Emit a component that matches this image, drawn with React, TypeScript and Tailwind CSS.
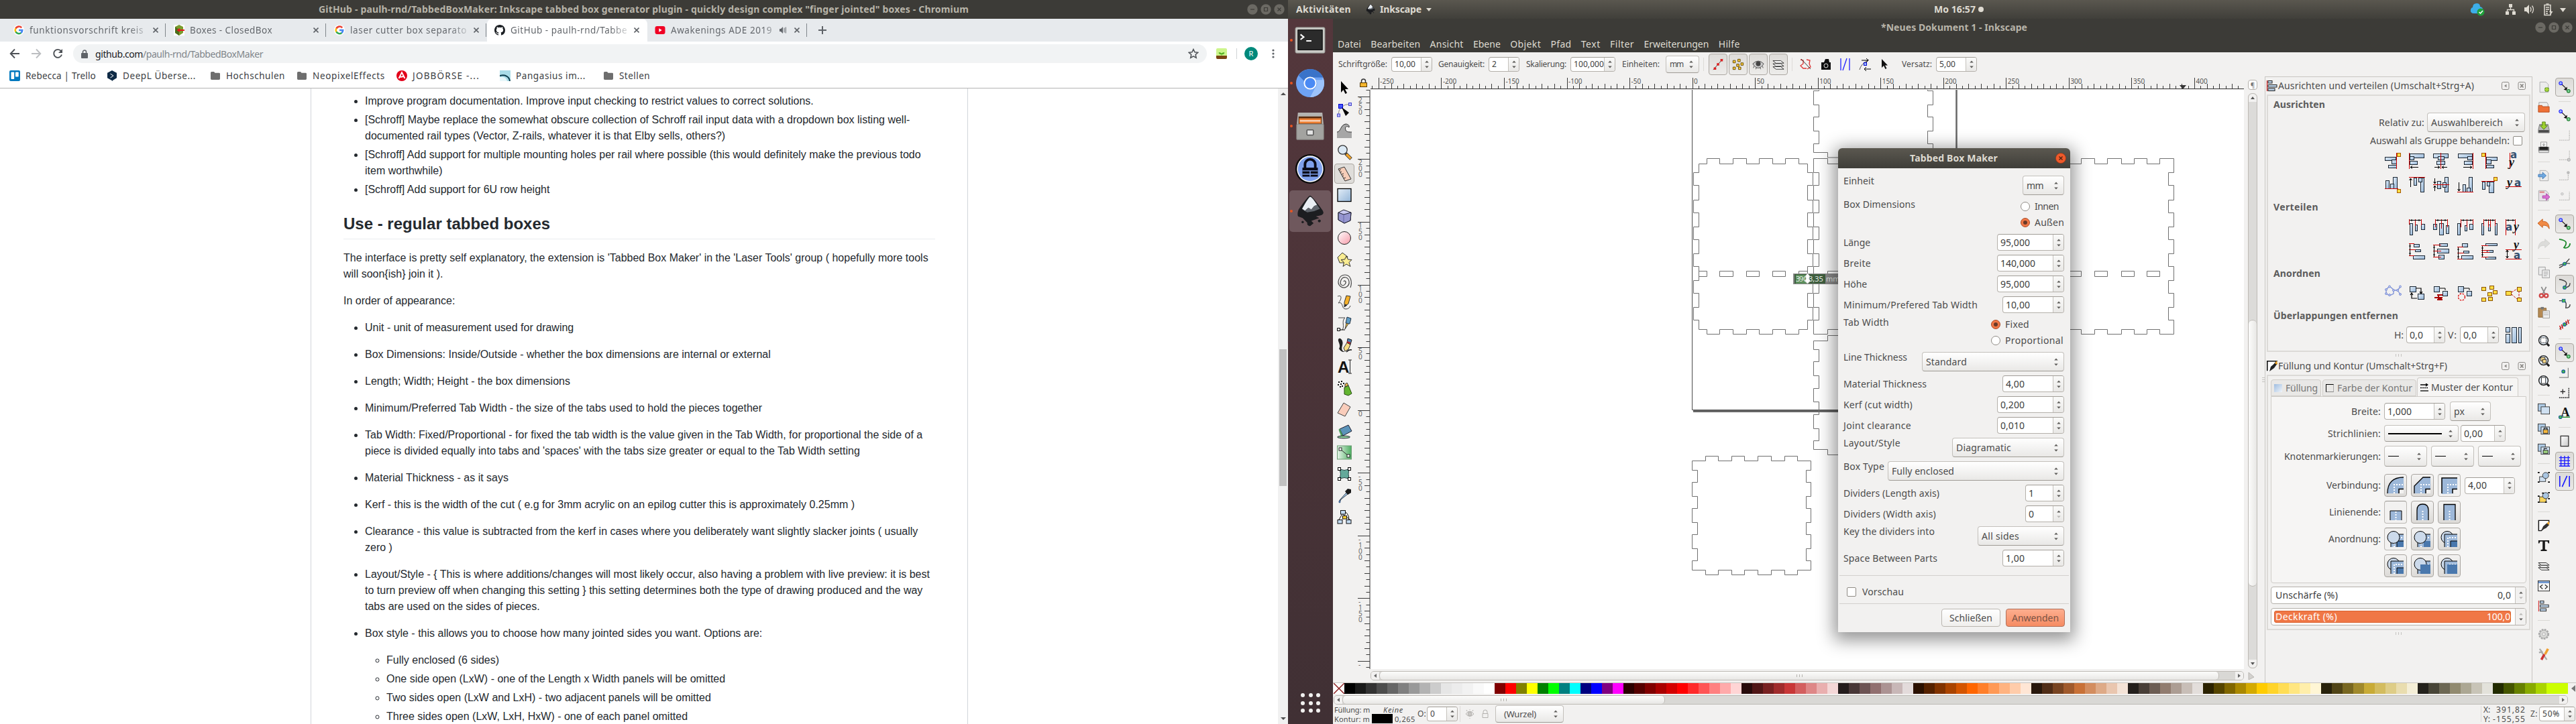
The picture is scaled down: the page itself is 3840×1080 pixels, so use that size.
import React, { useLayoutEffect, useRef } from "react";

type Kids = { children?: React.ReactNode };

/* Text set to a given measure by adjusting its tracking. */
function Fit({ w, c = "", children }: { w: number; c?: string; children: string }) {
  const ref = useRef<HTMLSpanElement>(null);
  useLayoutEffect(() => {
    const el = ref.current;
    if (!el) return;
    el.style.letterSpacing = "0px";
    el.style.width = "max-content";
    const natural = el.getBoundingClientRect().width;
    el.style.letterSpacing = (w - natural) / children.length + "px";
    el.style.width = w + "px";
  }, [w, children]);
  return (
    <span ref={ref} className={"inline-block whitespace-pre shrink-0 " + c}>
      {children}
    </span>
  );
}

/* ------------------------------------------------------------------ */
/* Chromium                                                            */
/* ------------------------------------------------------------------ */

function GoogleG() {
  return (
    <svg viewBox="0 0 16 16" className="size-4 shrink-0" fill="none" strokeWidth="2.6">
      <circle cx="8" cy="8" r="8" fill="#fff" />
      <path d="M12.2 4.4A5.3 5.3 0 0 0 3.4 5.6" stroke="#ea4335" />
      <path d="M3.4 5.4a5.3 5.3 0 0 0 0 5.2" stroke="#fbbc05" />
      <path d="M3.4 10.4a5.3 5.3 0 0 0 8 1.6" stroke="#34a853" />
      <path d="M8 8h5.2a5.3 5.3 0 0 1-1.9 4.1" stroke="#4285f4" />
    </svg>
  );
}

function GitHubMark() {
  return (
    <svg viewBox="0 0 16 16" className="size-4 shrink-0" fill="#1b1f23">
      <path d="M8 0C3.58 0 0 3.58 0 8c0 3.54 2.29 6.53 5.47 7.59.4.07.55-.17.55-.38v-1.49c-2.01.37-2.53-.49-2.69-.94-.09-.23-.48-.94-.82-1.13-.28-.15-.68-.52-.01-.53.63-.01 1.08.58 1.23.82.72 1.21 1.87.87 2.33.66.07-.52.28-.87.51-1.07-1.78-.2-3.64-.89-3.64-3.95 0-.87.31-1.59.82-2.15-.08-.2-.36-1.02.08-2.12 0 0 .67-.21 2.2.82a7.6 7.6 0 0 1 4 0c1.53-1.04 2.2-.82 2.2-.82.44 1.1.16 1.92.08 2.12.51.56.82 1.27.82 2.15 0 3.07-1.87 3.75-3.65 3.95.29.25.54.73.54 1.48v2.2c0 .21.15.46.55.38A8.01 8.01 0 0 0 16 8c0-4.42-3.58-8-8-8z" />
    </svg>
  );
}

function CloseX() {
  return (
    <svg viewBox="0 0 8 8" className="size-2 shrink-0" stroke="#5f6368" strokeWidth="1.6">
      <path d="M.5.5l7 7M7.5.5l-7 7" />
    </svg>
  );
}

function Tab({ icon, children, active, extra }: Kids & { icon: React.ReactNode; active?: boolean; extra?: React.ReactNode }) {
  return (
    <div
      className={
        active
          ? "flex h-[34px] w-[239px] shrink-0 items-center rounded-t-lg bg-white pl-[11px]"
          : "flex h-[34px] w-[239px] shrink-0 items-center pl-[11px]"
      }
    >
      {icon}
      <div className="ml-2 flex w-[176px] items-center overflow-hidden whitespace-nowrap text-[#5f6368]">
        <div className="flex-1 overflow-hidden bg-linear-to-r from-[#5f6368] from-85% to-[#5f636830] bg-clip-text text-transparent">{children}</div>
        {extra}
      </div>
      <div className="ml-[8px]">
        <CloseX />
      </div>
      {!active && <div className="ml-auto mr-px h-5 w-px bg-[#80868b]" />}
    </div>
  );
}

function Folder() {
  return (
    <svg viewBox="0 0 14 12" className="h-3 w-3.5 shrink-0" fill="#6e6e6e">
      <path d="M0 1.5Q0 0 1.5 0H5l1.5 1.7h6Q14 1.7 14 3v7.600Q14 12 12.500 12h-11Q0 12 0 10.600z" />
    </svg>
  );
}

function WinBtns() {
  return (
    <div className="flex gap-1">
      {["M5 8h6", "M5.500 5.500h5v5h-5z", "M5.500 5.500l5 5M10.500 5.500l-5 5"].map((d) => (
        <svg key={d} viewBox="0 0 16 16" className="size-4" fill="none">
          <circle cx="8" cy="8" r="7.700" fill="#6b6963" />
          <path d={d} stroke="#3c3b37" strokeWidth="1.200" />
        </svg>
      ))}
    </div>
  );
}

function Chromium() {
  return (
    <section className="flex h-[1080px] w-[1920px] shrink-0 flex-col bg-white font-['Noto_Sans',sans-serif]">
      <header className="flex h-7 shrink-0 items-center bg-[#3c3b37] pl-[475px] pr-[5px] text-[14px] font-bold leading-none text-[#b8b4a9]">
        <Fit w={969}>{'GitHub - paulh-rnd/TabbedBoxMaker: Inkscape tabbed box generator plugin - quickly design complex "finger jointed" boxes - Chromium'}</Fit>
        <div className="ml-auto">
          <WinBtns />
        </div>
      </header>

      <div className="flex h-[34px] shrink-0 bg-[#e7eaed] pl-[9px] text-[13.500px] leading-5">
        <Tab icon={<GoogleG />}>
          <Fit w={170}>funktionsvorschrift kreis</Fit>
        </Tab>
        <Tab
          icon={
            <svg viewBox="0 0 16 16" className="size-4 shrink-0">
              <path fill="#fff" d="M0 0h16v16H0z" />
              <path fill="#7a9c2e" d="M8 0l6 3v9l-6 4-6-4V3z" />
              <path fill="#4c6d1d" d="M8 7l-6-4v9l6 4z" />
              <path stroke="#e8141c" strokeWidth="2" d="M5 8h11M8 5.500v5" />
            </svg>
          }
        >
          <Fit w={123}>Boxes - ClosedBox</Fit>
        </Tab>
        <Tab icon={<GoogleG />}>
          <Fit w={174}>laser cutter box separato</Fit>
        </Tab>
        <Tab active icon={<GitHubMark />}>
          <Fit w={174}>GitHub - paulh-rnd/Tabbe</Fit>
        </Tab>
        <Tab
          icon={
            <svg viewBox="0 0 16 16" className="size-4 shrink-0">
              <rect y="2" x="0.500" width="15" height="12" rx="3" fill="#f00024" />
              <path fill="#fff" d="M6.300 5.300l4.400 2.700-4.400 2.700z" />
            </svg>
          }
          extra={
            <svg viewBox="0 0 12 12" className="mr-[3px] size-3 shrink-0" fill="#5f6368">
              <path d="M1 4h2l3-3v10L3 8H1z" />
              <path d="M8 2.500v7M10.300 1.500v9" stroke="#5f6368" />
            </svg>
          }
        >
          <Fit w={151}>Awakenings ADE 2019</Fit>
        </Tab>
        <svg viewBox="0 0 12 12" className="ml-[16px] mt-[11px] size-3" stroke="#5f6368" strokeWidth="2">
          <path d="M6 0v12M0 6h12" />
        </svg>
      </div>

      <div className="flex h-9 shrink-0 items-center">
        <svg viewBox="0 0 80 16" className="ml-[14px] h-4 w-20" fill="none" strokeWidth="1.900">
          <path stroke="#4d5156" d="M15 8H2M8 1.500L1.700 8 8 14.500" />
          <path stroke="#bcbec1" d="M33 8h13M40 1.500L46.300 8 40 14.500" />
          <path stroke="#4d5156" d="M77 4.200A6 6 0 1 0 78 9.500" />
          <path fill="#4d5156" d="M79 1v6h-6z" />
        </svg>
        <div className="ml-[15px] flex h-7 w-[1690px] items-center rounded-full bg-[#f1f3f4] pl-3 pr-3 text-[14px]">
          <svg viewBox="0 0 10 13" className="h-[13px] w-2.5" fill="#5f6368">
            <rect y="5" width="10" height="8" rx="1" />
            <path d="M2.500 5.500V3.500a2.500 2.500 0 0 1 5 0v2" fill="none" stroke="#5f6368" strokeWidth="1.500" />
          </svg>
          <Fit w={71} c="ml-[11px] text-[#202124]">github.com</Fit>
          <Fit w={179} c="text-[#80868b]">/paulh-rnd/TabbedBoxMaker</Fit>
          <svg viewBox="0 0 16 16" className="ml-auto size-4" fill="none" stroke="#4d5156" strokeWidth="1.500">
            <path d="M8 1.500l2 4.300 4.700.5-3.500 3.200 1 4.700L8 11.800l-4.200 2.400 1-4.700L1.300 6.300l4.700-.5z" />
          </svg>
        </div>
        <svg viewBox="0 0 16 16" className="ml-[14px] size-4">
          <rect width="16" height="16" rx="2" fill="#cdf58c" />
          <path d="M0 11h16v3a2 2 0 0 1-2 2H2a2 2 0 0 1-2-2z" fill="#7a4412" />
          <path d="M8 11V7M8 9C5 9 4 8 4 6.500 6 6.500 8 7 8 9zM8 9c3 0 4-1 4-2.500C10 6.500 8 7 8 9z" fill="#4fae1c" stroke="#4fae1c" strokeWidth=".6" />
        </svg>
        <div className="ml-[14px] h-4 w-px bg-[#d0d3d6]" />
        <div className="ml-[11px] flex size-5 items-center justify-center rounded-full bg-[#00897b] text-[11px] text-white">R</div>
        <svg viewBox="0 0 4 14" className="ml-[21px] h-3.5 w-1" fill="#5f6368">
          <circle cx="2" cy="2" r="1.600" />
          <circle cx="2" cy="7" r="1.600" />
          <circle cx="2" cy="12" r="1.600" />
        </svg>
      </div>

      <div className="flex h-[34px] shrink-0 items-center border-b border-[#b3b3b3] pb-[3px] pl-[14px] text-[13.500px] text-[#3c4043]">
        <svg viewBox="0 0 16 16" className="size-4">
          <rect width="16" height="16" rx="2" fill="#0079bf" />
          <rect x="2.500" y="2.500" width="4.700" height="10.500" rx=".7" fill="#fff" />
          <rect x="9" y="2.500" width="4.700" height="7" rx=".7" fill="#fff" />
        </svg>
        <Fit w={105} c="ml-2">Rebecca | Trello</Fit>
        <svg viewBox="0 0 16 16" className="ml-4 size-4">
          <path d="M8 0l7 3.800v7.500L9 15v1l-1-.7-7-4V3.800z" fill="#0f2b46" />
          <path d="M5.500 5l4.500 3-4.500 3" stroke="#fff" fill="none" />
        </svg>
        <Fit w={109} c="ml-2">DeepL Überse...</Fit>
        <div className="ml-[22px] flex"><Folder /></div>
        <Fit w={88} c="ml-[9px]">Hochschulen</Fit>
        <div className="ml-[18px] flex"><Folder /></div>
        <Fit w={108} c="ml-[9px]">NeopixelEffects</Fit>
        <svg viewBox="0 0 16 16" className="ml-[17px] size-4">
          <circle cx="8" cy="8" r="8" fill="#e2001a" />
          <path d="M3.500 12L8 3l4.500 9M5.500 10l5-1" stroke="#fff" strokeWidth="1.800" fill="none" />
        </svg>
        <Fit w={100} c="ml-2">JOBBÖRSE -...</Fit>
        <svg viewBox="0 0 16 16" className="ml-[30px] size-4">
          <rect width="16" height="16" fill="#a9dce8" />
          <path d="M0 10c7-1 10 2 11 6H0z" fill="#e8f7fa" />
          <path d="M0 8c8-2 14 1 15 8" stroke="#0b3b4c" strokeWidth="2" fill="none" />
        </svg>
        <Fit w={104} c="ml-2">Pangasius im...</Fit>
        <div className="ml-[27px] flex"><Folder /></div>
        <Fit w={46} c="ml-[9px]">Stellen</Fit>
      </div>

      <div className="flex min-h-0 flex-1 overflow-hidden">
        <div className="w-[464px] shrink-0 border-r border-[#d1d5da]" />
        <article className="w-[979px] shrink-0 border-r border-[#d1d5da] pl-[48px] pr-[48px] pt-[7px] font-['Liberation_Sans',sans-serif] text-[16px] leading-6 text-[#24292e]">
          <ul className="flex list-disc flex-col gap-1 pl-8">
            <li>Improve program documentation. Improve input checking to restrict values to correct solutions.</li>
            <li>[Schroff] Maybe replace the somewhat obscure collection of Schroff rail input data with a dropdown box listing well-documented rail types (Vector, Z-rails, whatever it is that Elby sells, others?)</li>
            <li>[Schroff] Add support for multiple mounting holes per rail where possible (this would definitely make the previous todo item worthwhile)</li>
            <li>[Schroff] Add support for 6U row height</li>
          </ul>
          <h2 className="mb-4 mt-6 border-b border-[#eaecef] pb-[7px] text-[24px] font-bold leading-[30px]">Use - regular tabbed boxes</h2>
          <p>The interface is pretty self explanatory, the extension is 'Tabbed Box Maker' in the 'Laser Tools' group ( hopefully more tools will soon&#123;ish&#125; join it ).</p>
          <p className="mt-4">In order of appearance:</p>
          <ul className="mt-4 flex list-disc flex-col gap-4 pl-8">
            <li>Unit - unit of measurement used for drawing</li>
            <li>Box Dimensions: Inside/Outside - whether the box dimensions are internal or external</li>
            <li>Length; Width; Height - the box dimensions</li>
            <li>Minimum/Preferred Tab Width - the size of the tabs used to hold the pieces together</li>
            <li>Tab Width: Fixed/Proportional - for fixed the tab width is the value given in the Tab Width, for proportional the side of a piece is divided equally into tabs and 'spaces' with the tabs size greater or equal to the Tab Width setting</li>
            <li>Material Thickness - as it says</li>
            <li>Kerf - this is the width of the cut ( e.g for 3mm acrylic on an epilog cutter this is approximately 0.25mm )</li>
            <li>Clearance - this value is subtracted from the kerf in cases where you deliberately want slightly slacker joints ( usually zero )</li>
            <li>Layout/Style - &#123; This is where additions/changes will most likely occur, also having a problem with live preview: it is best to turn preview off when changing this setting &#125; this setting determines both the type of drawing produced and the way tabs are used on the sides of pieces.</li>
            <li>
              Box style - this allows you to choose how many jointed sides you want. Options are:
              <ul className="mt-4 flex list-[circle] flex-col gap-1 pl-8">
                <li>Fully enclosed (6 sides)</li>
                <li>One side open (LxW) - one of the Length x Width panels will be omitted</li>
                <li>Two sides open (LxW and LxH) - two adjacent panels will be omitted</li>
                <li>Three sides open (LxW, LxH, HxW) - one of each panel omitted</li>
              </ul>
            </li>
          </ul>
        </article>
        <div className="ml-auto flex w-[15px] flex-col items-center bg-[#f1f1f1]">
          <svg viewBox="0 0 8 4" className="mt-[6px] h-1 w-2" fill="#505050"><path d="M4 0l4 4H0z" /></svg>
          <div className="mt-[379px] h-[204px] w-[11px] bg-[#c1c1c1]" />
          <svg viewBox="0 0 8 4" className="mb-[6px] mt-auto h-1 w-2" fill="#505050"><path d="M4 4l4-4H0z" /></svg>
        </div>
      </div>
    </section>
  );
}

/* ------------------------------------------------------------------ */
/* GTK widgets                                                         */
/* ------------------------------------------------------------------ */

function Arrows({ dim }: { dim?: "up" | "down" | "" }) {
  return (
    <svg viewBox="0 0 6 14" className="h-3.5 w-1.5 shrink-0">
      <path d="M3 1.500L5.800 4.500H.2z" fill={dim === "up" ? "#b9b8b6" : "#5c5b58"} />
      <path d="M3 12.500L5.800 9.500H.2z" fill={dim === "down" ? "#b9b8b6" : "#5c5b58"} />
    </svg>
  );
}

function Spin({ c, v, w, dim = "" }: { c: string; v: string; w: number; dim?: "up" | "down" | "" }) {
  return (
    <div className={"flex shrink-0 overflow-hidden rounded-[4px] border border-[#b4b0aa] border-t-[#a19d97] bg-white leading-none text-[#3c3c3c] " + c}>
      <div className="flex min-w-0 flex-1 items-center pl-1">
        <Fit w={w}>{v}</Fit>
      </div>
      <div className="flex w-4 items-center justify-center border-l border-[#c5c2bd] bg-linear-to-b from-[#fafaf9] to-[#e9e8e6]">
        <Arrows dim={dim} />
      </div>
    </div>
  );
}

function Combo({ c, children }: Kids & { c: string }) {
  return (
    <div className={"flex shrink-0 items-center justify-between rounded-[4px] border border-[#c3c0bb] border-b-[#9f9b95] bg-linear-to-b from-white to-[#e9e8e6] pl-[5px] pr-2 leading-none text-[#4c4c4c] " + c}>
      {children}
      <Arrows />
    </div>
  );
}

function Check() {
  return <span className="block size-3.5 shrink-0 rounded-[2px] border border-[#8f8b85] bg-white" />;
}

function Radio({ on, w, children }: { on?: boolean; w: number; children: string }) {
  return (
    <div className="flex h-6 items-center">
      <svg viewBox="0 0 14 14" className="mr-[7px] size-3.5">
        <circle cx="7" cy="7" r="6.500" fill={on ? "#f07746" : "#fff"} stroke={on ? "#a84e2b" : "#8f8b85"} />
        {on && <circle cx="7" cy="7" r="3" fill="#693a28" />}
      </svg>
      <Fit w={w}>{children}</Fit>
    </div>
  );
}

/* ------------------------------------------------------------------ */
/* Dialog                                                              */
/* ------------------------------------------------------------------ */

function Row({ label, lw, kind = "spin", children }: Kids & { label: string; lw: number; kind?: "spin" | "combo" | "radio" }) {
  const h = kind === "spin" ? "h-[25px] items-center" : kind === "combo" ? "h-[29px] items-start" : "h-[46px] items-start";
  return (
    <div className={"flex shrink-0 justify-between " + h}>
      <Fit w={lw} c="leading-4">{label}</Fit>
      {children}
    </div>
  );
}

function Dialog() {
  return (
    <div className="absolute left-[753px] top-[193px] flex h-[722px] w-[346px] flex-col rounded-t-[6px] bg-[#f2f1f0] text-[14px] leading-none text-[#4c4c4c] shadow-[0_6px_26px_6px_rgba(0,0,0,0.42)]">
      <div className="flex h-[30px] shrink-0 items-center rounded-t-[6px] bg-linear-to-b from-[#5b5850] to-[#3f3e39] pl-[107px] pr-1.5 font-bold text-[#dfdbd2]">
        <Fit w={131}>Tabbed Box Maker</Fit>
        <svg viewBox="0 0 16 16" className="ml-auto size-4">
          <circle cx="8" cy="8" r="7.600" fill="#ee5a2b" stroke="#9b3414" strokeWidth=".7" />
          <path d="M5.500 5.500l5 5M10.500 5.500l-5 5" stroke="#4b2012" strokeWidth="1.300" />
        </svg>
      </div>
      <div className="flex flex-col gap-1.5 pl-[8px] pr-[9px] pt-[11px]">
        <Row kind="combo" label="Einheit" lw={46}>
          <Combo c="h-[29px] w-[62px]"><Fit w={25}>mm</Fit></Combo>
        </Row>
        <Row kind="radio" label="Box Dimensions" lw={107}>
          <div className="-mt-px flex w-[65px] flex-col"><Radio w={36}>Innen</Radio><Radio on w={44}>Außen</Radio></div>
        </Row>
        <Row label="Länge" lw={40}><Spin c="h-[25px] w-[100px]" v="95,000" w={44} /></Row>
        <Row label="Breite" lw={41}><Spin c="h-[25px] w-[100px]" v="140,000" w={52} /></Row>
        <Row label="Höhe" lw={35}><Spin c="h-[25px] w-[100px]" v="95,000" w={44} /></Row>
        <Row label="Minimum/Prefered Tab Width" lw={200}><Spin c="h-[25px] w-[92px]" v="10,00" w={36} /></Row>
        <Row kind="radio" label="Tab Width" lw={68}>
          <div className="-mt-px flex w-[109px] flex-col"><Radio on w={36}>Fixed</Radio><Radio w={87}>Proportional</Radio></div>
        </Row>
        <Row kind="combo" label="Line Thickness" lw={95}><Combo c="h-[29px] w-[212px]"><Fit w={61}>Standard</Fit></Combo></Row>
        <Row label="Material Thickness" lw={124}><Spin c="h-[25px] w-[92px]" v="4,00" w={28} /></Row>
        <Row label="Kerf (cut width)" lw={103}><Spin c="h-[25px] w-[100px]" v="0,200" w={36} /></Row>
        <Row label="Joint clearance" lw={101}><Spin c="h-[25px] w-[100px]" v="0,010" w={36} /></Row>
        <Row kind="combo" label="Layout/Style" lw={85}><Combo c="h-[29px] w-[167px]"><Fit w={82}>Diagramatic</Fit></Combo></Row>
        <Row kind="combo" label="Box Type" lw={61}><Combo c="h-[29px] w-[263px]"><Fit w={93}>Fully enclosed</Fit></Combo></Row>
        <Row label="Dividers (Length axis)" lw={143}><Spin c="h-[25px] w-[58px]" v="1" w={8} /></Row>
        <Row label="Dividers (Width axis)" lw={138}><Spin c="h-[25px] w-[58px]" v="0" w={8} dim="down" /></Row>
        <Row kind="combo" label="Key the dividers into" lw={136}><Combo c="h-[29px] w-[129px]"><Fit w={56}>All sides</Fit></Combo></Row>
        <Row label="Space Between Parts" lw={140}><Spin c="h-[25px] w-[92px]" v="1,00" w={28} /></Row>
      </div>
      <div className="mx-0.5 mt-[13px] h-px bg-[#d2d0cd]" />
      <div className="flex h-[41px] items-center gap-[9px] pl-[13px] pt-1.5">
        <Check />
        <Fit w={62}>Vorschau</Fit>
      </div>
      <div className="mx-0.5 h-px bg-[#d2d0cd]" />
      <div className="flex justify-end gap-2 pr-2 pt-[7px]">
        <div className="flex h-[27px] w-[88px] items-center justify-center rounded-[4px] border border-[#bab6b0] bg-linear-to-b from-white to-[#f0efed]"><Fit w={64}>Schließen</Fit></div>
        <div className="flex h-[27px] w-[88px] items-center justify-center rounded-[4px] border border-[#b0705a] bg-linear-to-b from-[#fdae8f] to-[#f58b62] text-[#7a5345]"><Fit w={70}>Anwenden</Fit></div>
      </div>
    </div>
  );
}

/* ------------------------------------------------------------------ */
/* Rulers and canvas                                                   */
/* ------------------------------------------------------------------ */

const STEP = 9.355;

function TopRuler() {
  const ticks: React.ReactNode[] = [];
  for (let i = -51; i <= 88; i++) {
    const x = 479.6 + i * STEP;
    if (x < 0 || x > 1302) continue;
    const major = i % 10 === 0;
    const y = major ? 2 : i % 2 === 0 ? 11 : 14;
    ticks.push(<path key={i} d={"M" + (Math.round(x) + 0.5) + " " + y + "V19"} stroke="#3a3a3a" />);
    if (major) ticks.push(<text key={"t" + i} x={x + 2.5} y="10.500" fontSize="10" fill="#555">{String(i * 5)}</text>);
  }
  return (
    <svg viewBox="0 0 1302 20" className="h-5 w-[1302px] shrink-0">
      {ticks}
      <path d="M0 18.500h1302" stroke="#3a3a3a" strokeWidth="1.200" />
      <path d="M1206 13h10l-5 6z" fill="#333" />
    </svg>
  );
}

function SideRuler() {
  const out: React.ReactNode[] = [];
  for (let i = -41; i <= 51; i++) {
    const y = 477.6 - i * STEP;
    if (y < 0 || y > 864) continue;
    const major = i % 10 === 0;
    out.push(<path key={i} d={"M" + (major ? 0 : i % 2 === 0 ? 10 : 12.5) + " " + (Math.round(y) + 0.5) + "H18"} stroke="#3a3a3a" />);
    if (major)
      String(i * 5)
        .split("")
        .forEach((ch, k) => {
          const ty = y + 9 + k * 9;
          if (ty < 864) out.push(<text key={i + "-" + k} x="1" y={ty} fontSize="10" fill="#666">{ch}</text>);
        });
  }
  return (
    <svg viewBox="0 0 19 864" className="h-[864px] w-[19px] shrink-0">
      {out}
      <path d="M18 0v864" stroke="#3a3a3a" />
    </svg>
  );
}

type Pair = [number, number];

/* Closed outline of a finger-jointed panel; each edge toggles between two offsets. */
function panel(xs: number[], ys: number[], l: Pair, r: Pair, t: Pair, b: Pair) {
  const ex = xs.length % 2;
  const ey = ys.length % 2;
  let d = "M" + l[0] + " " + t[0];
  xs.forEach((x, i) => (d += "H" + x + "V" + t[(i + 1) % 2]));
  d += "H" + r[0];
  ys.forEach((y, i) => (d += "V" + y + "H" + r[(i + 1) % 2]));
  d += "V" + b[ex];
  [...xs].reverse().forEach((x, i) => (d += "H" + x + "V" + b[(ex + i + 1) % 2]));
  d += "H" + l[ey];
  [...ys].reverse().forEach((y, i) => (d += "V" + y + "H" + l[(ey + i + 1) % 2]));
  return d + "Z";
}

const YS = [257.5, 276.5, 298.5, 317.5, 338.5, 357.5, 378.5, 397.5, 418.5, 437.5, 458.5, 477.5];

function Canvas() {
  const xsA = [2544.5, 2563.5, 2583.5, 2603.5, 2622.5, 2642.5, 2661.5, 2681.5];
  return (
    <svg viewBox="2043 134 1302 864" className="h-[864px] w-[1302px] shrink-0 bg-white" fill="none" stroke="#707070">
      <path d="M2522.500 134V611.500H2916" stroke="#4a4a4a" />
      <path d="M2916.500 134V615" stroke="#666" strokeWidth="2.500" />
      <path d="M2524 613.500H2917.500" stroke="#666" strokeWidth="3" />
      <path d={panel(xsA, YS, [2532.5, 2524.5], [2694.5, 2702.5], [244.5, 236.5], [491.5, 498.5])} />
      <path d={panel([2724.5], YS, [2703.5, 2711.5], [2800, 2792], [236.5, 244.5], [498.5, 491.5])} />
      <path d={panel([3102.5, 3122.5, 3141.5, 3162.5, 3181.5, 3200.5, 3219.5], YS, [3060, 3052], [3240.5, 3232.5], [244.5, 236.5], [491.5, 498.5])} />
      <path d={panel([2724.5], [521.5, 539.5, 560.5, 579.5, 599.5, 618.5, 639.5, 657.5], [2703.5, 2711.5], [2800, 2792], [508.5, 500.5], [670.5, 678.5])} />
      <path d={panel([2542.5, 2561.5, 2581.5, 2600.5, 2620.5, 2640.5, 2660.5, 2679.5], [701.5, 719.5, 740.5, 758.5, 779.5, 797.5, 818.5, 836.5], [2522.5, 2530.5], [2699.5, 2692.5], [687.5, 680.5], [850.5, 857.5])} />
      <path d="M2711.500 134v1.500h-8v21h8v18h-8v21h8v19h-8v13h21v7.500h80M2873.500 134v1.500h8v21h-8v18h8v21h-8v19h8v13" />
      <path d="M2532.500 404.500h12v8h-12M2563.500 404.500h20v8h-20zM2603.500 404.500h19v8h-19zM2642.500 404.500h19v8h-19zM2681.500 412.500v-8h13M2724.500 404.500h20v8h-20zM3080 404.500h22.500v8H3080M3122.500 404.500h19v8h-19zM3162.500 404.500h19v8h-19zM3200.500 404.500h19v8h-19z" />
      <rect x="2673" y="408" width="70" height="16" fill="#8a8a8a" stroke="none" />
      <rect x="2675" y="409" width="46" height="14" fill="#3f5f3f" stroke="none" />
      <rect x="2677" y="410" width="18" height="13" fill="#5c8f5c" stroke="none" />
      <g stroke="none" fill="#e8eee8" fontSize="11">
        <text x="2677" y="420">3</text>
        <text x="2682" y="420">90</text>
        <text x="2696" y="420">3,35</text>
        <text x="2722" y="420">mm</text>
      </g>
      <path d="M2694.500 408l3 4-1 4 2 3-4 4-4-4 2-3-1-4z" fill="#fff" stroke="#ddd" />
    </svg>
  );
}

/* ------------------------------------------------------------------ */
/* Icons                                                               */
/* ------------------------------------------------------------------ */

const TOOLS: React.ReactNode[] = [
  <path d="M6 1v17l3.500-4 3 6 2.500-1.300-3-5.700h5z" fill="#000" />,
  <g fill="none" stroke="#222"><path d="M2 20Q2 4 20 3" stroke="#888" /><rect x="2.500" y="3.500" width="6" height="6" fill="#45f" stroke="#00c" /><rect x="17.500" y="1.500" width="4" height="4" fill="#bbf" stroke="#44c" /><rect x=".5" y="18" width="4" height="4" fill="#bbf" stroke="#44c" /><path d="M7 8l11 8-5 5z" fill="#000" stroke="none" /></g>,
  <g><path d="M0 22v-9c6 0 5-11 13-12 4 0 6 3 5 5-3-3-7-1-5 4 1 3 5 3 9 3v9z" fill="#a6a6a6" /><path d="M0 13c6 0 5-11 13-12 4 0 6 3 5 5-3-3-7-1-5 4 1 3 5 3 9 3" fill="none" stroke="#333" /></g>,
  <g><circle cx="8.500" cy="7.500" r="6.700" fill="#dbe9f5" stroke="#333" strokeWidth="1.300" /><path d="M13 13l8 8" stroke="#333" strokeWidth="5" /><path d="M14 14l6.500 6.500" stroke="#f3a52a" strokeWidth="3.400" /></g>,
  <g><path d="M2 4l9-3 10 18-9 3z" fill="#f6cdb8" stroke="#333" /><path d="M3 6l3-1M5 9l2-1M7 12l3-1M8 15l2-1M10 18l3-1" stroke="#333" /></g>,
  <rect x="1" y="1.500" width="20" height="19" fill="url(#blue)" stroke="#000" strokeWidth="1.300" />,
  <g stroke="#223" strokeWidth="1"><path d="M2 5l8-4 11 4-1 12-9 4-9-5z" fill="#c9c9f0" /><path d="M2 5l8 3 11-3-1 12-9 4-9-5z" fill="#8080c0" fillOpacity=".7" /><path d="M10 8v12" stroke="#66a" /></g>,
  <ellipse cx="11" cy="11" rx="9.500" ry="9.500" fill="url(#pink)" stroke="#222" />,
  <g fill="#f9ec91" stroke="#333"><path d="M1 8l7-7 8 6-3 9H4z" /><path d="M14 6l2.500 5 5.500.5-4 4 2 6-6-3.500L9 21.500l1.500-6L6 11.500l5.500-.5z" /></g>,
  <path d="M20 21c3-8 1-19-8-19S-1 14 5 19s14 0 13-7-9-9-12-2 3 10 6 6-1-7-2-4" fill="none" stroke="#444" strokeWidth="1.200" />,
  <g fill="none" stroke="#444"><path d="M1 2c8-3 5 6 1 10 8-3 4 9 11 9 4 0 6-2 7-5" /><path d="M14 1l6 1-3 11-6 5 0-7z" fill="#f5b02a" stroke="#333" /><path d="M11 18l1-4 3 1z" fill="#111" /></g>,
  <g fill="none" stroke="#444"><path d="M2 2h10C6 7 12 15 8 20" /><path d="M15 1l6 2-2 8-6-1z" fill="#5f9cc5" stroke="#234" /><path d="M14 10l3 1-5 8z" fill="#e9bd3c" /><path d="M.5 17.500h4v4h-4zM5 20h7" stroke="#000" /></g>,
  <g><path d="M3 1C-1 4 7 10 3 16c3 5 6 5 9 5-6-2-5-6-4-10C10 5 6 0 3 1z" fill="#222" /><path d="M12 20l-2-5 5-8 5 3-3 7z" fill="#f6dd83" stroke="#333" /><path d="M15 7l1-6 6 2-2 7z" fill="#4d7fae" stroke="#222" /><path d="M15 6l5 2" stroke="#b22" strokeWidth="2" /><path d="M14 21q4-4 8-3" fill="none" stroke="#111" strokeWidth="1.500" /></g>,
  <g><text x="1" y="20" fontSize="24" fontWeight="bold" fill="#111" fontFamily="Liberation Sans">A</text><path d="M19.500 1v20M17 1h5M17 21h5" stroke="#222" /></g>,
  <g><path d="M11 10l6-3 5 12-5 3-6-2z" fill="#63b530" stroke="#274d10" /><path d="M12 9V5l3-2 2 4z" fill="#e6b84c" stroke="#333" /><path d="M2 2h2M6 1h2M1 6h2M5 5h2M9 4h2M4 9h2M7 8h2" stroke="#111" strokeWidth="2" /></g>,
  <path d="M10 1l10 6-8 14L1 16z" fill="#f9cdbb" stroke="#444" />,
  <g stroke="#223"><path d="M4 8l13-6 5 9-13 7z" fill="#5b93b9" /><path d="M4 8c-1 4 3 5 3 11" fill="none" stroke="#4a9c5c" strokeWidth="2.500" /><ellipse cx="10" cy="20" rx="9.500" ry="1.800" fill="#8fd39b" /></g>,
  <g><rect x=".5" y="1" width="21" height="20" fill="url(#green)" stroke="#6a9c72" /><path d="M5 6l12 10" stroke="#333" /><rect x="3" y="4" width="4" height="4" fill="#fff" stroke="#222" /><rect x="15" y="14" width="4" height="4" fill="#fff" stroke="#222" /></g>,
  <g><path d="M4 4q7 3 14 0-2 7 0 14-7-3-14 0 3-7 0-14z" fill="#63a99a" stroke="#244" /><g fill="#fff" stroke="#000"><rect x="1.500" y="1.500" width="4" height="4" /><rect x="16.500" y="1.500" width="4" height="4" /><rect x="1.500" y="16.500" width="4" height="4" /><rect x="16.500" y="16.500" width="4" height="4" /></g></g>,
  <g><path d="M14 7l2 2-10 8-1 2-1-1z" fill="#a9cbe8" stroke="#345" /><path d="M12 5l4-4 5 1 0 5-5 3z" fill="#1a1a1a" /><path d="M4 18c-2 3-1 4 0 4s2-2 0-4z" fill="#4d7fb8" stroke="#235" strokeWidth=".6" /></g>,
  <g stroke="#111"><path d="M9 5L3 15M9 7l10 8M5 2q13 0 13 14" fill="none" /><rect x="5.500" y="1.500" width="7" height="5.500" fill="#c3dbf1" /><rect x="8.500" y="9.500" width="6" height="4.500" fill="#fc3" /><rect x="1" y="15.500" width="7" height="5.500" fill="#c3dbf1" /><rect x="14" y="15.500" width="7" height="5.500" fill="#c3dbf1" /></g>,
];

const doc = <path d="M3.500 1.500h10l4 4v13h-14z" fill="#ececec" stroke="#a8a8a8" />;
const magn = (
  <g><circle cx="9.500" cy="9.500" r="7.700" fill="#e3edf6" stroke="#222" strokeWidth="1.600" /><path d="M15 15l4 4" stroke="#222" strokeWidth="3.500" /></g>
);
const twoSq = (
  <g fill="#aecbe6" stroke="#333"><rect x=".5" y="1.500" width="12" height="12" /><rect x="5.500" y="6.500" width="14" height="12" fill="#cfe0f1" /></g>
);

const COMMANDS: (React.ReactNode | null)[] = [
  <g>{doc}<path d="M11.500 14h7M15 10.500v7" stroke="#4d8a12" strokeWidth="5" /><path d="M12 14h6M15 11v6" stroke="#a9d53a" strokeWidth="3" /></g>,
  <g><path d="M2 2h13l2 3v9H2z" fill="#eee" stroke="#999" /><path d="M1 18V7h6l1 2h11v9z" fill="#ee7137" stroke="#b4481a" /></g>,
  <g><path d="M3 5h14l2 9v5H1v-5z" fill="#b9b9b9" stroke="#777" /><path d="M1.500 14.500h17v4h-17z" fill="#4a4a4a" /><path d="M7.500 1h5v6H16l-6 6.500L4 7h3.500z" fill="#9fd02f" stroke="#4f7f10" /></g>,
  <g><path d="M5 1h10v8H5z" fill="#f4f4f4" stroke="#999" /><path d="M10 3v4M8 5l2 2 2-2" stroke="#777" fill="none" /><path d="M1 9h18v7H1z" fill="#7b7b7b" /><path d="M3 9h14v5H3z" fill="#222" /><path d="M2 15h16v3.500H2z" fill="#ddd" stroke="#888" /></g>,
  null,
  <g>{doc}<path d="M1 8h7V4.500L14 10l-6 5.500V12H1z" fill="#6ea8e0" stroke="#3f78b4" /></g>,
  <g><path d="M1.500 1.500h12l4 4v13h-16z" fill="#e7e0e7" stroke="#aaa" /><path d="M3 4h8" stroke="#d77" strokeWidth="2" /><path d="M8 10h6V6.500l6 5.500-6 5.500V14H8z" fill="#dd6fd6" stroke="#a444a0" /></g>,
  null,
  <path d="M0 9l8-7v4c7-1 11 4 11 12-2-4-5-6-11-5.500V16z" fill="#f08a45" stroke="#c15a1c" />,
  <path d="M20 9l-8-7v4C5 5 1 10 1 18c2-4 5-6 11-5.500V16z" fill="#dcdcda" stroke="#cfcfcc" />,
  null,
  <g fill="#ececec" stroke="#999"><path d="M1.500 1.500h11v13h-11z" /><path d="M7.500 6.500h12v13h-12z" /><path d="M10 10h7M10 13h7M10 16h5" /></g>,
  <g fill="none"><path d="M6 1l6 12M14 1L8 13" stroke="#8c8c8c" strokeWidth="2" /><circle cx="6" cy="15.500" r="3" stroke="#cf4646" strokeWidth="2.500" /><circle cx="14" cy="15.500" r="3" stroke="#cf4646" strokeWidth="2.500" /></g>,
  <g><path d="M1 3h13v15H1z" fill="#b58a54" stroke="#8a6636" /><path d="M5 1h5v4H5z" fill="#777" /><path d="M8.500 7.500h11v12h-11z" fill="#eee" stroke="#999" /><path d="M10 11h8M10 14h8" stroke="#aaa" /></g>,
  null,
  <g>{magn}<rect x="5" y="5.500" width="9" height="8" fill="#fff" stroke="#111" strokeDasharray="2 1" /></g>,
  <g>{magn}<rect x="5" y="4.500" width="7" height="6" fill="#f8d98a" stroke="#222" /><rect x="8" y="8" width="6" height="6" fill="#f8d98a" stroke="#222" /></g>,
  <g>{magn}<rect x="6" y="4.500" width="7" height="10" fill="#fff" stroke="#222" /></g>,
  null,
  twoSq,
  <g>{twoSq}<rect x="9" y="11" width="8" height="6" fill="#f5b73c" stroke="#222" /><path d="M10.500 11V8.500h5V11" fill="none" stroke="#222" strokeWidth="1.300" /></g>,
  <g>{twoSq}<rect x="9" y="12" width="8" height="5" fill="#9ed37f" stroke="#222" /><path d="M10.500 12V9h4v1" fill="none" stroke="#222" strokeWidth="1.300" /></g>,
  null,
  <g><rect x="3" y="9" width="10" height="8" fill="#cfe0f1" stroke="#333" /><circle cx="13" cy="7" r="5" fill="#aac6e2" stroke="#333" /><path d="M0 1h3v2H0zM17 1h3v2h-3zM0 17h3v2H0zM17 17h3v2h-3z" fill="#000" /></g>,
  <g><rect x="3" y="9" width="11" height="9" fill="#f8d35a" stroke="#333" /><circle cx="13" cy="7" r="5" fill="#aac6e2" stroke="#333" /><path d="M0 7h3v2H0zM7 2h3v2H7zM17 1h3v2h-3zM0 17h3v2H0zM12 17h3v2h-3zM17 11h3v2h-3z" fill="#000" /></g>,
  null,
  <g><path d="M2 2h16L2 18z" fill="#fff" /><path d="M1.500 1.500h17v4L6 18.500H1.500z" fill="none" stroke="#111" strokeWidth="1.600" /><path d="M6 18l3-7 6-5 4 3-5 5z" fill="#333" /><path d="M15 6l4-3v6z" fill="#f5a623" /></g>,
  <path d="M1 1h18v5h-1.500L16 3h-4v13l3 1v2H5v-2l3-1V3H4L2.500 6H1z" fill="#1a1a1a" />,
  <g fill="#f0f0f0" stroke="#222"><path d="M1 13l5 4h13l-5-4z" /><path d="M1 9l5 4h13l-5-4z" /><path d="M1 5l5 4h13l-5-4z" /></g>,
  <g><rect x=".5" y="1.500" width="19" height="17" fill="#f4f4f4" stroke="#222" /><path d="M1 4h18" stroke="#6a94cf" strokeWidth="3" /><path d="M8 8l-4 3.500L8 15M12 8l4 3.500-4 3.500" stroke="#222" fill="none" strokeWidth="1.300" /></g>,
  <g fill="#bcd3ea" stroke="#222"><path d="M1.500 1v18" stroke="#c00" /><rect x="4" y="1.500" width="6" height="4" /><rect x="4" y="8" width="14" height="4" /><rect x="4" y="14.500" width="10" height="4" /></g>,
  null,
  <g fill="#d8d8d6" stroke="#aaa"><circle cx="10" cy="10" r="7.500" strokeDasharray="3 1.500" strokeWidth="3" /><circle cx="10" cy="10" r="6.500" /><circle cx="10" cy="10" r="2.500" fill="#f2f1f0" /></g>,
  <g fill="none"><path d="M3 1l4 5-5 1M6 6l9 13" stroke="#aaa" strokeWidth="2.500" /><path d="M17 1l-5 9" stroke="#f0a030" strokeWidth="4" /><path d="M11 10l-5 9" stroke="#c33" strokeWidth="4" /></g>,
];

const node = (x: number, y: number, c = "#4bbd4b") => <circle cx={x} cy={y} r="2.600" fill={c} stroke="#175a9a" strokeWidth="1.200" />;
const snapPair = (
  <g><path d="M4 4l10 9.500" stroke="#111" strokeWidth="1.300" /><path d="M13 15.500l1.500-6-6 4.500z" fill="#111" /><circle cx="3.500" cy="3.500" r="2.600" fill="#9ab8ff" stroke="#1a1aff" strokeWidth="1.200" /><circle cx="16.500" cy="16.500" r="2.600" fill="#7fd49a" stroke="#1a7a2a" strokeWidth="1.200" /></g>
);
const dots = (d: string) => <path d={d} stroke="#bdbcba" strokeWidth="1.400" strokeDasharray="2 1" fill="none" />;

const SNAPS: ([React.ReactNode, boolean] | null)[] = [
  [snapPair, true],
  null,
  [snapPair, false],
  [dots("M1 18h17V1"), false],
  [<g>{dots("M1 17h17V1")}<circle cx="17" cy="17" r="2.500" fill="#ccc" stroke="#aaa" /></g>, false],
  [<g>{dots("M1 17h15V5")}<circle cx="16" cy="5" r="2.500" fill="#bbb" /></g>, false],
  [<g>{dots("M1 17h17V3")}<circle cx="6" cy="7" r="2" fill="#ddd" stroke="#bbb" /></g>, false],
  null,
  [snapPair, true],
  [<path d="M1 2c13 2 14 6 8 14 5 2 10-2 10-7" stroke="#1f8a2d" strokeWidth="2" fill="none" />, false],
  [<g><path d="M1 16C8 14 12 8 18 1M1 12q9-4 18-3" stroke="#444" fill="none" strokeWidth="1.500" />{node(10, 9.5)}</g>, false],
  [<g><path d="M1 2c14 2 14 7 9 13 5 1 9-2 9-7" stroke="#444" strokeWidth="1.600" fill="none" />{node(10, 15.5)}</g>, true],
  [<g><path d="M1 4h8c4 2 4 5 3 12 5 0 7-2 7-6" stroke="#444" strokeWidth="1.600" fill="none" /><rect x="6" y="1.500" width="5" height="5" fill="#4bbd4b" stroke="#175a9a" /></g>, false],
  [<g><path d="M1 18L19 2" stroke="#444" /><path d="M2 12l2 7M5 10l2 7M12 4l2 7M15 2l2 7" stroke="#c00" strokeWidth="1.500" />{node(10, 10)}</g>, false],
  null,
  [snapPair, true],
  [<g><path d="M1 18h15V2" stroke="#888" fill="none" strokeWidth="1.400" />{node(8, 8)}</g>, false],
  [<g><path d="M7 4v8M3 8h8" stroke="#333" strokeWidth="1.500" /><path d="M1 18h16V2" stroke="#222" fill="none" strokeWidth="1.600" strokeDasharray="2 1" /></g>, false],
  [<g><text x="4" y="16" fontSize="20" fontWeight="bold" fill="#111" fontFamily="Liberation Serif">A</text><path d="M1 17h18" stroke="#1f8a2d" strokeWidth="1.500" />{node(3, 17)}</g>, false],
  null,
  [<rect x="3.500" y="1.500" width="13" height="17" fill="url(#page)" stroke="#222" strokeWidth="1.300" />, false],
  [<path d="M4 1v18M10 1v18M16 1v18M1 4h18M1 9h18M1 14h18M1 18h18" stroke="#1a1aff" strokeWidth="1.500" />, true],
  [<path d="M2 1v18M18 1v18M6 19L14 1" stroke="#1a1aff" strokeWidth="1.800" />, true],
];

type Box = [number, number, number, number];
type Glyph = { r?: Box[]; red?: string; k?: string; yel?: Box; extra?: React.ReactNode };

function Al({ r = [], red, k, yel, extra }: Glyph) {
  return (
    <svg viewBox="0 0 24 24" className="size-6 shrink-0 overflow-visible" fill="none">
      {r.map((b, i) => (
        <rect key={i} x={b[0] + 0.5} y={b[1] + 0.5} width={b[2] - 1} height={b[3] - 1} fill="url(#blue)" stroke="#1c2733" />
      ))}
      {red && <path d={red} stroke="#cc0000" />}
      {k && <path d={k} stroke="#000" />}
      {yel && <rect x={yel[0] + 0.5} y={yel[1] + 0.5} width={yel[2] - 1} height={yel[3] - 1} fill="#fd4" stroke="#a65a00" />}
      {extra}
    </svg>
  );
}

const serif = (x: number, y: number, s: string, it?: boolean) => (
  <text x={x} y={y} fontSize={it ? 18 : 15} fontWeight="bold" fontStyle={it ? "italic" : "normal"} fill={it ? "#111" : "#34506e"} fontFamily={it ? "Liberation Serif" : "DejaVu Sans"}>{s}</text>
);
const hArr = (a: number, b: number) => `M${a} 1.500H${b}M${a + 3} 0v3M${b - 3} 0v3`;
const vArr = (a: number, b: number) => `M1.500 ${a}V${b}M0 ${a + 3}h3M0 ${b - 3}h3`;

const ALIGN1: Glyph[] = [
  { r: [[0, 6, 17, 6], [10, 10, 8, 7], [5, 18, 13, 5]], red: "M17.500 0V24", yel: [18, 0, 6, 6] },
  { r: [[1, 1, 22, 7], [1, 5, 7, 6], [1, 12, 12, 6]], red: "M.5 0V24", k: "M14 21.500H2M5 19.500l-3 2 3 2" },
  { r: [[0, 1, 23, 7], [7, 5, 10, 6], [5, 12, 13, 6]], red: "M11.500 0V24", k: "M2 21.500h8M14 21.500h7M7 19.500l3 2-3 2M16 19.500l-3 2 3 2" },
  { r: [[1, 1, 22, 7], [15, 5, 8, 6], [10, 12, 13, 6]], red: "M23.500 0V24", k: "M9 21.500H22M19 19.500l3 2-3 2" },
  { r: [[7, 6, 17, 6], [7, 10, 8, 7], [7, 18, 12, 5]], red: "M6.500 0V24", yel: [0, 0, 6, 6] },
  { red: "M6.500 0V24", extra: <g>{serif(7, 8, "a")}{serif(5, 20, "y", true)}</g> },
];
const ALIGN2: Glyph[] = [
  { r: [[1, 5, 6, 13], [12, 0, 7, 18], [8, 10, 6, 8]], red: "M0 17.500H20", yel: [18, 18, 6, 6] },
  { r: [[7, 1, 5, 12], [17, 1, 6, 22], [14, 1, 6, 7]], red: "M0 .5H24", k: "M2.500 15V2M.5 5l2-3 2 3" },
  { r: [[6, 6, 6, 12], [17, 0, 6, 23], [14, 8, 6, 8]], red: "M0 11.500H24", k: "M2.500 2v8M2.500 21v-8M.5 7l2 3 2-3M.5 16l2-3 2 3" },
  { r: [[8, 11, 5, 12], [17, 0, 6, 23], [14, 16, 6, 7]], red: "M0 22.500H24", k: "M2.500 8v13M.5 18l2 3 2-3" },
  { r: [[1, 7, 5, 12], [11, 7, 8, 17], [8, 7, 5, 7]], red: "M0 6.500H20", yel: [18, 0, 6, 6] },
  { red: "M0 14.500H24", extra: <g>{serif(2, 14, "y", true)}{serif(13, 14, "a")}</g> },
];
const DIST1: Glyph[] = [
  { r: [[1, 6, 5, 18], [9, 8, 4, 10], [18, 7, 6, 9]], red: "M.5 0V8M9.500 0V10M18.500 0V9", k: hArr(1, 18) },
  { r: [[0, 7, 6, 9], [9, 6, 7, 18], [19, 9, 5, 13]], red: "M3.500 0V12M12.500 0V14M21.500 0V12", k: hArr(4, 21) },
  { r: [[0, 6, 5, 18], [11, 9, 4, 9], [18, 7, 6, 9]], red: "M5.500 0V12M14.500 0V12M23.500 0V8", k: hArr(6, 23) },
  { r: [[0, 6, 4, 18], [10, 8, 4, 10], [20, 6, 4, 18]], red: "M3.500 0V10M10.500 0V12M13.500 0V12M20.500 0V10", k: hArr(4, 20) },
  { red: "M.5 0V24M14.500 0V24", k: hArr(1, 14), extra: <g>{serif(0, 17, "a")}{serif(12, 17, "y", true)}</g> },
];
const DIST2: Glyph[] = [
  { r: [[7, 1, 9, 5], [9, 9, 9, 4], [6, 18, 18, 6]], red: "M0 .5H8M0 9.500H10M0 18.500H8", k: vArr(1, 18) },
  { r: [[9, 0, 13, 5], [6, 8, 18, 7], [8, 17, 9, 7]], red: "M0 2.500H12M0 11.500H12M0 20.500H12", k: vArr(3, 20) },
  { r: [[7, 0, 9, 6], [9, 11, 9, 4], [6, 18, 18, 6]], red: "M0 5.500H9M0 14.500H10M0 23.500H8", k: vArr(6, 23) },
  { r: [[6, 0, 18, 4], [8, 10, 10, 4], [6, 20, 16, 4]], red: "M0 3.500H10M0 10.500H12M0 13.500H12M0 20.500H10", k: vArr(4, 20) },
  { red: "M0 9.500H24M0 23.500H24", k: "M2.500 10v12M.5 13l2-3 2 3M.5 19l2 3 2-3", extra: <g>{serif(12, 8, "y", true)}{serif(12, 23, "a")}</g> },
];
const swap = <path d="M10 4h8v7M16 9l2 3 2-3M4 11v8h8M2 14l2-3 2 3" stroke="#000" strokeWidth="1.200" />;
const yb = (x: number, y: number, w = 6, h = 5) => <rect x={x + 0.5} y={y + 0.5} width={w} height={h} fill="#fd4" stroke="#8a5200" />;
const ARRANGE: Glyph[] = [
  { extra: <g stroke="#7c8fd6" fill="#c4cdf2"><path d="M2 6l5-5 6 5v6l-6 3-5-3zM13 7h6l4-5M19 7l4 6" fill="none" strokeWidth="1.300" /><circle cx="2" cy="6" r="1.500" /><circle cx="7" cy="1.500" r="1.500" /><circle cx="13" cy="7" r="1.500" /><circle cx="7" cy="14" r="1.500" /><circle cx="2" cy="12" r="1.500" /><circle cx="23" cy="1.500" r="1.500" /><circle cx="19" cy="7" r="1.500" /><circle cx="23" cy="13" r="1.500" /></g> },
  { r: [[1, 1, 10, 9], [13, 12, 10, 9]], extra: swap },
  { r: [[1, 1, 9, 9], [14, 8, 8, 8]], extra: <g><path d="M10 4h8v3" stroke="#000" /><path d="M2 18h12M6 14h8M8 14v6h5M6 21h8" stroke="#a00" strokeWidth="2" /></g> },
  { r: [[1, 1, 9, 9], [14, 8, 8, 8]], extra: <g><path d="M10 4h8v3" stroke="#000" /><circle cx="6.500" cy="17" r="5" stroke="#d00" strokeWidth="1.300" strokeDasharray="2.500 1.500" /></g> },
  { extra: <g>{yb(0, 2)}{yb(12, 0)}{yb(17, 7)}{yb(9, 10)}{yb(0, 18)}{yb(10, 17)}</g> },
  { extra: <g><path d="M9 10l8-5M9 13l8 7M20 8v10" stroke="#c00" strokeDasharray="3 1.500" />{yb(0, 8, 8, 6)}{yb(17, 2, 6, 6)}{yb(17, 18, 6, 5)}</g> },
];

/* ------------------------------------------------------------------ */
/* Docked panels                                                       */
/* ------------------------------------------------------------------ */

function PanelHead({ icon, w, children }: { icon: React.ReactNode; w: number; children: string }) {
  return (
    <div className="flex h-[26px] shrink-0 items-center pl-[2px] pr-[9px]">
      <svg viewBox="0 0 16 16" className="size-4">{icon}</svg>
      <Fit w={w} c="ml-px">{children}</Fit>
      <svg viewBox="0 0 36 12" className="ml-auto h-3 w-9" fill="none" stroke="#8b8985">
        <rect x=".5" y=".5" width="10.500" height="11" rx="2" />
        <path d="M7.500 3.500v5L4 6z" fill="#8b8985" stroke="none" />
        <rect x="25" y=".5" width="10.500" height="11" rx="2" />
        <path d="M28 3.500l4.500 5M32.500 3.500L28 8.500" strokeWidth="1.800" />
      </svg>
    </div>
  );
}

function Heading({ w, c = "", children }: { w: number; c?: string; children: string }) {
  return (
    <h3 className={"flex h-[19px] shrink-0 items-center font-bold text-[#5c5c5c] " + c}>
      <Fit w={w}>{children}</Fit>
    </h3>
  );
}

function IconRow({ items, c }: { items: Glyph[]; c: string }) {
  return (
    <div className={"mr-[5px] flex shrink-0 justify-end gap-3 " + c}>
      {items.map((g, i) => (
        <Al key={i} {...g} />
      ))}
    </div>
  );
}

function Grip() {
  return (
    <div className="flex h-2 shrink-0 justify-center gap-[3px] pt-[3px]">
      <i className="h-1 w-px bg-[#c5c3c0]" /><i className="h-1 w-px bg-[#c5c3c0]" /><i className="h-1 w-px bg-[#c5c3c0]" />
    </div>
  );
}

function StyleBtn({ on, children }: Kids & { on?: boolean }) {
  return (
    <div
      className={
        on
          ? "flex size-[34px] items-center justify-center rounded-[4px] border border-[#bcb9b4] border-t-[#98948e] bg-[#f2f1f0]"
          : "flex size-[34px] items-center justify-center rounded-[4px] border border-[#a9a5a0] bg-linear-to-b from-[#f4f3f2] to-[#dcdad7]"
      }
    >
      <svg viewBox="0 0 24 24" className="size-6 overflow-visible" fill="#9db8d9">{children}</svg>
    </div>
  );
}

const dash = { stroke: "#fff", strokeWidth: 2, strokeDasharray: "2 2", fill: "none" };
const corner = (
  <g><path d="M10 24V11h14" {...dash} /><path d="M17 24v-6.500h7V24z" fill="#f2f1f0" /><path d="M17 24v-6.500h7" stroke="#000" strokeWidth="1.500" fill="none" /></g>
);

function Order({ m }: { m: number }) {
  const big = m === 4 || m === 5;
  const fill = <rect x={big ? 9 : 14} y={big ? 10 : 15} width={big ? 15 : 10} height={big ? 14 : 9} fill="#4a78ad" />;
  const stroke = (
    <g><rect x="5" y="5" width="19" height="19" fill="#9db8d9" /><path d="M5 24V5h19" stroke="#000" fill="none" /><path d="M10 24V10h14" {...dash} /></g>
  );
  const circ = <circle cx="9" cy="9.500" r="9" fill="#ccdaeb" stroke="#000" />;
  const line = m !== 4 && m !== 1 ? <path d="M14 24v-9h10" stroke="#000" fill="none" /> : null;
  const behind = m === 2 || m === 3 || m === 5;
  return behind ? <g>{circ}{stroke}{fill}{big ? null : line}</g> : <g>{stroke}{fill}{line}{circ}{m === 4 ? fill : null}</g>;
}

function PanelRow({ label, w, c, children }: Kids & { label: string; w: number; c: string }) {
  return (
    <div className={"flex shrink-0 items-center " + c}>
      <div className="mr-[5px] flex w-[163px] justify-end">{label && <Fit w={w}>{label}</Fit>}</div>
      {children}
    </div>
  );
}

function Docks() {
  return (
    <aside className="flex w-[399px] shrink-0 flex-col border border-b-0 border-[#c8c6c2] text-[14px] leading-none text-[#4c4c4c]">
      <PanelHead w={292} icon={<g fill="#bcd3ea" stroke="#222"><path d="M.5 0v16" stroke="#c00" /><rect x="2" y=".5" width="6" height="3.500" /><rect x="2" y="6.500" width="13" height="3.500" /><rect x="2" y="12" width="10" height="3.500" /></g>}>
        Ausrichten und verteilen (Umschalt+Strg+A)
      </PanelHead>
      <div className="mx-[2px] flex h-[384px] shrink-0 flex-col border-2 border-[#dcdad7] pl-[8px] pr-[6px]">
        <Heading w={77} c="mt-[3px]">Ausrichten</Heading>
        <div className="mt-[3px] flex shrink-0 items-center justify-end gap-1">
          <Fit w={68}>Relativ zu:</Fit>
          <Combo c="h-[29px] w-[146px]"><Fit w={107}>Auswahlbereich</Fit></Combo>
        </div>
        <div className="mr-1 mt-1 flex h-[18px] shrink-0 items-center justify-end gap-[5px]">
          <Fit w={208}>Auswahl als Gruppe behandeln:</Fit>
          <Check />
        </div>
        <IconRow items={ALIGN1} c="mt-[9px]" />
        <IconRow items={ALIGN2} c="mt-3" />
        <Heading w={67} c="mt-[11px]">Verteilen</Heading>
        <IconRow items={DIST1} c="mt-[9px]" />
        <IconRow items={DIST2} c="mt-3" />
        <Heading w={70} c="mt-[11px]">Anordnen</Heading>
        <IconRow items={ARRANGE} c="mt-[9px]" />
        <Heading w={186} c="mt-[11px]">Überlappungen entfernen</Heading>
        <div className="mr-[5px] mt-[7px] flex shrink-0 items-center justify-end">
          <Fit w={14}>H:</Fit>
          <Spin c="ml-1 h-[25px] w-[58px]" v="0,0" w={20} />
          <Fit w={14} c="ml-1">V:</Fit>
          <Spin c="ml-1 h-[25px] w-[58px]" v="0,0" w={20} />
          <div className="ml-2.5"><Al r={[[0, 0, 7, 8], [0, 10, 7, 14], [9, 0, 8, 24], [19, 0, 5, 24]]} /></div>
        </div>
      </div>
      <Grip />
      <PanelHead w={252} icon={<g><path d="M0 0h16L9 9 4 16H0z" fill="#fff" /><path d="M.8 15.200V.8h14L11 6" fill="none" stroke="#111" strokeWidth="1.600" /><path d="M4 16l2-7 8-7 2 2-5 7z" fill="#222" /><path d="M12 4l3-4 1 6z" fill="#f5a623" /></g>}>
        Füllung und Kontur (Umschalt+Strg+F)
      </PanelHead>
      <div className="mx-[2px] flex h-[381px] shrink-0 flex-col border-2 border-[#dcdad7] px-[4px] pt-[2px]">
        <div className="flex h-[28px] shrink-0 items-end">
          <div className="flex h-[25px] w-[75px] items-center rounded-t-[4px] border border-[#cfccc8] bg-[#e9e8e6] pl-1 text-[#777]">
            <span className="mr-[5px] block size-3 bg-linear-to-br from-[#9fbde0] to-[#f0f4f9]" /><Fit w={48}>Füllung</Fit>
          </div>
          <div className="ml-0.5 flex h-[25px] w-[140px] items-center rounded-t-[4px] border border-[#cfccc8] bg-[#e9e8e6] pl-1 text-[#777]">
            <span className="mr-[5px] block size-3 border border-black border-b-[#888] border-r-[#aaa]" /><Fit w={112}>Farbe der Kontur</Fit>
          </div>
          <div className="ml-px flex h-[28px] w-[151px] items-center rounded-t-[4px] border border-b-0 border-[#cfccc8] bg-[#f6f5f4] pl-1">
            <svg viewBox="0 0 12 12" className="mr-1 size-3" stroke="#000" strokeWidth="1.300"><path d="M0 2h11M8 0l3 2-3 2" fill="none" /><path d="M0 6.500h12" strokeDasharray="2 1" /><path d="M0 11h12" /></svg>
            <Fit w={122}>Muster der Kontur</Fit>
          </div>
        </div>
        <div className="flex h-[279px] shrink-0 flex-col rounded-b-[4px] border border-[#cfccc8] bg-[#f6f5f4]">
          <PanelRow label="Breite:" w={44} c="mt-[7px] h-[29px]">
            <Spin c="h-[25px] w-[91px]" v="1,000" w={36} />
            <Combo c="ml-[7px] h-[29px] w-[61px]"><Fit w={16}>px</Fit></Combo>
          </PanelRow>
          <PanelRow label="Strichlinien:" w={79} c="mt-[6px] h-[25px]">
            <Combo c="h-[25px] w-[111px]"><span className="h-0.5 w-20 bg-black" /></Combo>
            <Spin c="ml-[3px] h-[25px] w-[67px]" v="0,00" w={28} dim="down" />
          </PanelRow>
          <PanelRow label="Knotenmarkierungen:" w={144} c="mt-[6px] h-[31px]">
            <Combo c="h-[31px] w-[64px]"><span className="h-px w-4 bg-black" /></Combo>
            <Combo c="ml-[6px] h-[31px] w-[64px]"><span className="h-px w-4 bg-black" /></Combo>
            <Combo c="ml-[6px] h-[31px] w-[64px]"><span className="h-px w-4 bg-black" /></Combo>
          </PanelRow>
          <PanelRow label="Verbindung:" w={81} c="mt-[11px] h-[34px]">
            <div className="flex gap-1.5">
              <StyleBtn><path d="M0 24C0 8 8 0 24 0v17h-7v7z" /><path d="M0 24C0 8 8 0 24 0" stroke="#000" strokeWidth="1.300" fill="none" />{corner}</StyleBtn>
              <StyleBtn><path d="M0 24V13L13 0h11v24z" /><path d="M0 24V13L13 0h11" stroke="#000" strokeWidth="1.300" fill="none" />{corner}</StyleBtn>
              <StyleBtn on><path d="M1 25V1h23v23z" /><path d="M1 24V1h23" stroke="#000" strokeWidth="1.500" fill="none" />{corner}</StyleBtn>
            </div>
            <Spin c="ml-1.5 h-[25px] w-[75px]" v="4,00" w={28} />
          </PanelRow>
          <PanelRow label="Linienende:" w={77} c="mt-[6px] h-[34px]">
            <div className="flex gap-1.5">
              <StyleBtn on><path d="M4 24V10h17v14" stroke="#000" /><path d="M12.500 11v13" {...dash} /></StyleBtn>
              <StyleBtn><path d="M4 24V9Q4 0 12.500 0T21 9v15" stroke="#000" strokeWidth="1.300" /><path d="M12.500 10v14" {...dash} /></StyleBtn>
              <StyleBtn><path d="M4 24V.5h17V24" stroke="#000" strokeWidth="1.300" /><path d="M12.500 10v14" {...dash} /></StyleBtn>
            </div>
          </PanelRow>
          <PanelRow label="Anordnung:" w={78} c="mt-[6px] h-[34px]">
            <div className="flex gap-1.5"><StyleBtn on><Order m={0} /></StyleBtn><StyleBtn><Order m={1} /></StyleBtn><StyleBtn><Order m={2} /></StyleBtn></div>
          </PanelRow>
          <PanelRow label="" w={0} c="mt-[6px] h-[34px]">
            <div className="flex gap-1.5"><StyleBtn><Order m={3} /></StyleBtn><StyleBtn><Order m={4} /></StyleBtn><StyleBtn><Order m={5} /></StyleBtn></div>
          </PanelRow>
        </div>
        <div className="mt-[5px] flex h-[26px] shrink-0 overflow-hidden rounded-[4px] border border-[#b4b0aa] bg-white text-[#3c3c3c]">
          <div className="flex flex-1 items-center justify-between px-1.5"><Fit w={93}>Unschärfe (%)</Fit><Fit w={20}>0,0</Fit></div>
          <div className="flex w-4 items-center justify-center border-l border-[#c5c2bd] bg-[#f2f1f0]"><Arrows dim="down" /></div>
        </div>
        <div className="mt-[6px] flex h-[26px] shrink-0 overflow-hidden rounded-[4px] border border-[#b4b0aa] bg-white text-white">
          <div className="flex flex-1 items-center pl-1 pr-1.5">
            <div className="flex h-[18px] flex-1 items-center justify-between rounded-[3px] border border-[#d9622f] bg-[#f07746] pl-px"><Fit w={92}>Deckkraft (%)</Fit><Fit w={35}>100,0</Fit></div>
          </div>
          <div className="flex w-4 items-center justify-center border-l border-[#c5c2bd] bg-[#f2f1f0]"><Arrows dim="up" /></div>
        </div>
      </div>
      <Grip />
    </aside>
  );
}

/* ------------------------------------------------------------------ */
/* Inkscape                                                            */
/* ------------------------------------------------------------------ */

const PALETTE = (
  "000000 1a1a1a 333333 4d4d4d 666666 808080 999999 b3b3b3 cccccc e6e6e6 ececec f2f2f2 f9f9f9 ffffff " +
  "800000 ff0000 808000 ffff00 008000 00ff00 008080 00ffff 000080 0000ff 800080 ff00ff " +
  "2b0000 550000 800000 aa0000 d40000 ff0000 ff2a2a ff5555 ff8080 ffaaaa ffd5d5 " +
  "280b0b 501616 782121 a02c2c c83737 d35f5f de8787 e9afaf f4d7d7 241c1c 483737 6c5353 916f6f ac9393 c8b7b7 e3dbdb " +
  "2b1100 552200 803300 aa4400 d45500 ff6600 ff7f2a ff9955 ffb380 ffccaa ffe6d5 " +
  "28170b 502d16 784421 a05a2c c87137 d38d5f deaa87 e9c6af f4e3d7 241f1c 483e37 6c5d53 917c6f ac9d93 c8beb7 e3dedb " +
  "2b2200 554400 806600 aa8800 d4aa00 ffcc00 ffd42a ffdd55 ffe680 ffeeaa fff6d5 " +
  "28220b 504416 786721 a0892c c8ab37 d3bc5f decd87 e9ddaf f4eed7 24221c 484537 6c6753 918a6f aca793 c8c4b7 e3e2db " +
  "222b00 445500 668000 88aa00 aad400 ccff00 ccff00"
).split(" ");

const MENU: [string, number][] = [
  ["Datei", 35], ["Bearbeiten", 74], ["Ansicht", 50], ["Ebene", 41], ["Objekt", 46], ["Pfad", 31], ["Text", 29], ["Filter", 36], ["Erweiterungen", 97], ["Hilfe", 32],
];

function Ink() {
  return (
    <g>
      <path d="M24 1Q27 1 46 27q4 7-6 9l-6 1 6 3-14 5 4 4-6 5q-6-1-5-6l-8-8-8-3Q1 32 4 25 20 2 24 1z" fill="#1c1d20" />
      <path d="M24 3q3 0 12 14l-5 2-5 6-5-3-6 5-5-3Q21 4 24 3z" fill="#e9eef3" />
      <path d="M10 25l5 2 6-5 5 3 5-6 5-2 5 7-10 4-12 2z" fill="#8a939c" fillOpacity=".6" />
      <circle cx="40" cy="45" r="2.500" fill="#1c1d20" /><circle cx="11" cy="47" r="2" fill="#1c1d20" />
    </g>
  );
}

function ToggleBtn({ children }: Kids) {
  return (
    <div className="flex h-8 w-7 items-center justify-center rounded-[4px] border border-[#aba7a1] bg-linear-to-b from-[#dddbd8] to-[#edecea]">
      <svg viewBox="0 0 20 20" className="size-[18px]" fill="none">{children}</svg>
    </div>
  );
}

const launcher: [React.ReactNode, boolean][] = [
  [<g><rect x="1" y="4" width="46" height="40" rx="2" fill="#c9c9c5" stroke="#8a8a86" /><rect x="5" y="8" width="38" height="31" fill="#2b2b2b" stroke="#000" /><path d="M9 15l5 4-5 4M18 25h8" stroke="#fff" strokeWidth="2.200" fill="none" /></g>, true],
  [<g><circle cx="24" cy="24" r="22" fill="#6ea3f4" /><path d="M24 2a22 22 0 0 1 20 13H24a10 10 0 0 0-9 6L6 12A22 22 0 0 1 24 2z" fill="#3a73c9" /><path d="M44 15a22 22 0 0 1-20 31l8-15a10 10 0 0 0 1-12h10z" fill="#9cc3fb" /><circle cx="24" cy="24" r="10" fill="#fff" /><circle cx="24" cy="24" r="8" fill="#4a8af4" /></g>, true],
  [<g><path d="M5 3h38l2 20v22H3V23z" fill="#b4b4b1" /><path d="M6 9h36v12H6z" fill="#5a2c0e" /><path d="M7 12h34v8H7z" fill="#ed8136" /><path d="M8 16h32" stroke="#fff" strokeWidth="1.500" /><rect x="3" y="21" width="42" height="24" rx="1" fill="#a3a3a0" stroke="#858582" /><rect x="19" y="30" width="10" height="8" rx="1" fill="#e5e5e5" stroke="#555" strokeWidth="1.500" /></g>, true],
  [<g><circle cx="24" cy="24" r="23" fill="#0b0b0b" /><circle cx="24" cy="24" r="20.500" fill="#fff" /><circle cx="24" cy="24" r="19" fill="#7fa0ec" /><path d="M16 23v-6a8 8 0 0 1 16 0v6" stroke="#0a0a18" strokeWidth="4" fill="none" /><path d="M12 22h24v14H12z" fill="#0a0a18" /><path d="M12 27h24M12 32h24M24 27v9" stroke="#7fa0ec" strokeWidth="1.500" /></g>, false],
];

function HScroll({ c, thumb }: { c: string; thumb: string }) {
  return (
    <div className={"flex h-[14px] items-stretch overflow-hidden rounded-[5px] border border-[#bdbab5] bg-[#d9d8d5] " + c}>
      <div className="flex w-[12px] shrink-0 items-center justify-center bg-[#f2f1f0] text-[#555]"><svg viewBox="0 0 4 6" className="h-1.5 w-1"><path d="M4 0v6L0 3z" fill="#666" /></svg></div>
      <div className={"flex items-center justify-center gap-[3px] rounded-[5px] border-x border-[#bdbab5] bg-linear-to-b from-[#fcfcfb] to-[#e8e7e5] " + thumb}>
        <i className="h-1 w-px bg-[#b5b3af]" /><i className="h-1 w-px bg-[#b5b3af]" /><i className="h-1 w-px bg-[#b5b3af]" />
      </div>
      <div className="ml-auto flex w-[12px] shrink-0 items-center justify-center bg-[#f2f1f0]"><svg viewBox="0 0 4 6" className="h-1.5 w-1"><path d="M0 0v6l4-3z" fill="#666" /></svg></div>
    </div>
  );
}

function Inkscape() {
  return (
    <main className="relative flex w-[1853px] shrink-0 flex-col overflow-hidden bg-[#f2f1f0]">
      <div className="flex h-[26px] shrink-0 items-center bg-[#3c3b37] pl-[817px] pr-[5px] text-[14px] font-bold leading-none text-[#b8b4a9]">
        <Fit w={218}>*Neues Dokument 1 - Inkscape</Fit>
        <div className="ml-auto"><WinBtns /></div>
      </div>
      <nav className="flex h-6 shrink-0 items-center gap-[14.300px] bg-[#3c3b37] pl-[7px] text-[14px] leading-none text-[#dfdbd2]">
        {MENU.map(([m, w]) => <Fit key={m} w={w}>{m}</Fit>)}
      </nav>

      <div className="flex h-9 shrink-0 items-center pl-2 text-[12px] leading-none text-[#4c4c4c]">
        <Fit w={73}>Schriftgröße:</Fit>
        <Spin c="ml-[6px] h-[22px] w-[61px]" v="10,00" w={31} />
        <Fit w={69} c="ml-[9px]">Genauigkeit:</Fit>
        <Spin c="ml-[6px] h-[22px] w-[46px]" v="2" w={7} />
        <Fit w={60} c="ml-[10px]">Skalierung:</Fit>
        <Spin c="ml-[6px] h-[22px] w-[67px]" v="100,000" w={45} />
        <Fit w={56} c="ml-[10px]">Einheiten:</Fit>
        <Combo c="ml-[9px] h-[26px] w-[50px]"><Fit w={20}>mm</Fit></Combo>
        <i className="ml-[6px] h-5 w-px bg-[#dddbd8]" />
        <div className="ml-[7px] flex gap-0.5">
          <ToggleBtn><path d="M2 19L18 1" stroke="#333" /><path d="M3 15h4v4H3zM8 8h4v4H8zM14 1h4v4h-4z" fill="#d22" /></ToggleBtn>
          <ToggleBtn><g fill="#fc3" stroke="#5a4300"><path d="M1.500 3.500h4v4h-4zM9.500 1.500h4v4h-4zM14.500 7.500h4v4h-4zM7.500 9.500h4v4h-4zM1.500 14.500h4v4h-4zM10.500 14.500h4v4h-4z" /></g></ToggleBtn>
          <ToggleBtn><path d="M1 9q9-9 18 0-4 7-9 7T1 9z" fill="#ccc" stroke="#444" /><circle cx="10" cy="9" r="4" fill="#444" /><path d="M3 13l-1 3M7 15l-1 3M13 15l1 3M17 13l1 3" stroke="#444" /></ToggleBtn>
          <ToggleBtn><g fill="#fff" stroke="#222"><path d="M1 14l5 4h13l-5-4z" /><path d="M1 9l5 4h13l-5-4z" /><path d="M1 4l5 4h13l-5-4z" /></g></ToggleBtn>
        </div>
        <i className="ml-[6px] h-5 w-px bg-[#dddbd8]" />
        <svg viewBox="0 0 140 20" className="ml-[9px] h-5 w-[140px]" fill="none">
          <path d="M3 3l4 1 0 5-4 3 4 4h5M12 3l5 1-1 5 2 5-5 3" stroke="#d33" strokeWidth="1.300" /><path d="M4 2l14 15" stroke="#333" />
          <path d="M34 7h4l2-5h5l1 5h2v11H34z" fill="#111" /><circle cx="41" cy="12" r="3" fill="#111" stroke="#ddd" />
          <path d="M63 1v18M76 1v18M66 19L72 1" stroke="#22f" strokeWidth="1.300" />
          <path d="M91 18q2-9 14-15" stroke="#555" /><path d="M94 4h10M101 1l3 3-3 3M108 17H98M101 14l-3 3 3 3" stroke="#000" /><rect x="97.500" y="7.500" width="4" height="4" fill="#9bf" stroke="#00c" />
          <path d="M124 2v13l3-3 2.500 5 2-1-2.500-4.500h4z" fill="#111" />
        </svg>
        <Fit w={45} c="ml-[14px]">Versatz:</Fit>
        <Spin c="ml-[6px] h-[22px] w-[61px]" v="5,00" w={24} />
      </div>

      <div className="flex h-[904px] shrink-0">
        <div className="flex w-[37px] shrink-0 flex-col pl-0.5 pt-px">
          {TOOLS.map((t, i) => (
            <div key={i} className="flex h-8 shrink-0 items-center">
              <div className={i === 4 ? "flex size-[30px] items-center justify-center rounded-[4px] border border-[#aba7a1] bg-[#dfddda]" : "flex size-[30px] items-center justify-center"}>
                <svg viewBox="0 0 22 22" className="size-[22px] overflow-visible">{t}</svg>
              </div>
            </div>
          ))}
        </div>
        <div className="flex w-[19px] shrink-0 flex-col">
          <svg viewBox="0 0 19 20" className="h-5 w-[19px] shrink-0">
            <path d="M5.500 10V7a3 3 0 0 1 6 0v3" fill="none" stroke="#333" strokeWidth="1.500" />
            <rect x="3.500" y="9.500" width="10" height="6" fill="#f5b52c" stroke="#5a3b00" />
          </svg>
          <SideRuler />
        </div>
        <div className="flex w-[1302px] shrink-0 flex-col">
          <TopRuler />
          <Canvas />
          <HScroll c="mt-[3px]" thumb="w-[1252px]" />
        </div>
        <div className="ml-[6px] flex w-[14px] shrink-0 flex-col pt-[5px]">
          <div className="flex h-[15px] items-center justify-center rounded-[4px] border border-[#b5b1ab] bg-white text-[10px] leading-none text-[#777]">¶</div>
          <div className="mt-[5px] flex h-[858px] flex-col items-center rounded-[6px] border border-[#bdbab5] bg-[#dcdbd9]">
            <div className="flex h-3 w-full items-center justify-center rounded-t-[6px] bg-[#f2f1f0]"><svg viewBox="0 0 6 4" className="h-1 w-1.5"><path d="M3 0l3 4H0z" fill="#555" /></svg></div>
            <div className="mt-[325px] h-[398px] w-full rounded-[6px] border-y border-[#bdbab5] bg-linear-to-r from-[#fcfcfb] to-[#e8e7e5]" />
            <div className="mt-auto flex h-3 w-full items-center justify-center rounded-b-[6px] bg-[#f2f1f0]"><svg viewBox="0 0 6 4" className="h-1 w-1.5"><path d="M3 4l3-4H0z" fill="#555" /></svg></div>
          </div>
          <svg viewBox="0 0 10 12" className="mt-[5px] h-3 w-2.5" fill="#d3d1ce" stroke="#b9b6b2"><path d="M1 1l8 7-8 4z" /></svg>
        </div>
        <div className="flex w-[11px] shrink-0 flex-col justify-center gap-0.5 pl-[7px]">
          <i className="h-px w-1 bg-[#c5c3c0]" /><i className="h-px w-1 bg-[#c5c3c0]" /><i className="h-px w-1 bg-[#c5c3c0]" />
        </div>
        <Docks />
        <div className="flex w-[33px] shrink-0 flex-col items-center pt-px">
          {COMMANDS.map((g, i) =>
            g ? (
              <div key={i} className="flex h-[30px] shrink-0 items-center"><svg viewBox="0 0 20 20" className="size-[18px]">{g}</svg></div>
            ) : (
              <div key={i} className="flex h-3 shrink-0 items-center"><i className="h-px w-[18px] bg-[#dad8d5]" /></div>
            )
          )}
        </div>
        <div className="flex w-[30px] shrink-0 flex-col items-center pt-px">
          {SNAPS.map((s, i) =>
            s ? (
              <div key={i} className="flex h-[30px] shrink-0 items-center">
                <div className={s[1] ? "flex size-7 items-center justify-center rounded-[4px] border border-[#aba7a1] bg-linear-to-b from-[#dddbd8] to-[#eae9e7]" : "flex size-7 items-center justify-center"}>
                  <svg viewBox="0 0 20 20" className="size-[18px]">{s[0]}</svg>
                </div>
              </div>
            ) : (
              <div key={i} className="flex h-3 shrink-0 items-center"><i className="h-px w-[18px] bg-[#dad8d5]" /></div>
            )
          )}
        </div>
      </div>

      <div className="flex h-[17px] shrink-0 border-t border-[#c8c6c2] pl-px">
        <svg viewBox="0 0 16 16" className="size-4 shrink-0 bg-white"><path d="M0 0l16 16M16 0L0 16" stroke="#8a1a1a" strokeWidth="1.400" /></svg>
        {PALETTE.map((p, i) => (
          <div key={i} className="h-4 w-4 shrink-0" style={{ backgroundColor: "#" + p }} />
        ))}
        <svg viewBox="0 0 6 10" className="ml-[5px] mt-[3px] h-2.5 w-1.5"><path d="M6 0v10L0 5z" fill="#777" /></svg>
      </div>
      <HScroll c="ml-px mt-[2px] w-[1840px] shrink-0" thumb="w-[481px]" />

      <footer className="flex h-[28px] shrink-0 items-center pl-[2px] text-[11px] leading-none text-[#4c4c4c]">
        <div className="flex w-[124px] flex-col gap-px">
          <div className="flex h-[13px] items-center"><Fit w={53}>Füllung: m</Fit><Fit w={30} c="ml-[20px] italic">Keine</Fit></div>
          <div className="flex h-[13px] items-center"><Fit w={53}>Kontur: m</Fit><span className="ml-[3px] h-[14px] w-[31px] bg-black" /><Fit w={31} c="ml-[3px]">0,265</Fit></div>
        </div>
        <Fit w={13} c="text-[12px]">O:</Fit>
        <Spin c="ml-px h-[22px] w-[46px] text-[12px]" v="0" w={7} />
        <i className="ml-[3px] h-6 w-px bg-[#dddbd8]" />
        <svg viewBox="0 0 40 14" className="ml-[8px] h-3.5 w-10" fill="none" stroke="#b4b2af">
          <circle cx="6" cy="7" r="3" fill="#c9c7c4" /><path d="M0 7q6-8 12 0-6 7-12 0M6 1V0M2 3L1 1M10 3l1-2M6 13v1" />
          <path d="M26 6V4a3 3 0 0 1 6 0v2M25 6.500h8v6h-8z" />
        </svg>
        <Combo c="ml-[4px] h-[26px] w-[102px] text-[13px]"><Fit w={48} c="ml-[7px]">(Wurzel)</Fit></Combo>
        <i className="ml-auto h-6 w-px bg-[#dddbd8]" />
        <div className="ml-[3px] flex w-[63px] flex-col gap-[3px] text-[12px] leading-[11px]">
          <div className="flex justify-between"><span>X:</span><Fit w={44}>391,82</Fit></div>
          <div className="flex justify-between"><span>Y:</span><Fit w={49}>-155,55</Fit></div>
        </div>
        <Fit w={11} c="ml-[7px] text-[12px]">Z:</Fit>
        <Spin c="ml-[2px] mr-px h-[22px] w-[54px] text-[12px]" v="50%" w={26} />
      </footer>
      <Dialog />
    </main>
  );
}

function Desktop() {
  return (
    <section className="flex h-[1080px] w-[1920px] shrink-0 flex-col font-['Noto_Sans',sans-serif]">
      <header className="flex h-7 shrink-0 items-center bg-linear-to-b from-[#5a574f] to-[#403f3a] pl-[12px] text-[14px] font-bold leading-none text-[#dfdbd2]">
        <Fit w={82}>Aktivitäten</Fit>
        <svg viewBox="0 0 48 56" className="ml-[20px] h-4 w-[18px]"><Ink /></svg>
        <Fit w={62} c="ml-[5px]">Inkscape</Fit>
        <svg viewBox="0 0 8 5" className="ml-[7px] h-[5px] w-2"><path d="M0 0h8L4 5z" fill="#dfdbd2" /></svg>
        <Fit w={62} c="ml-[749px]">Mo 16:57</Fit>
        <span className="ml-[4px] size-2 rounded-full bg-[#dfdbd2]" />
        <svg viewBox="0 0 150 20" className="ml-auto mr-[14px] h-5 w-[150px]" fill="none">
          <path d="M12 16q-6 0-5-6 1-3 3-3 0-6 6-6 5 0 5 5 5 1 4 6-1 4-5 4z" fill="#3daee9" />
          <circle cx="22" cy="14" r="5.500" fill="#1fa03a" /><path d="M19.500 14l2 2 3.500-4" stroke="#fff" strokeWidth="1.500" />
          <path d="M64 2h5v5h-5zM59 13h5v5h-5zM69 13h5v5h-5z" fill="#dfdbd2" /><path d="M66.500 7v3.500M61.500 13v-2.500h10V13" stroke="#dfdbd2" strokeWidth="1.300" />
          <path d="M87 7h3l4-4v14l-4-4h-3z" fill="#dfdbd2" /><path d="M96 6.500q2 3.500 0 7M98.500 4.500q4 5.500 0 11" stroke="#dfdbd2" strokeWidth="1.300" />
          <rect x="117" y="3.500" width="9" height="15" stroke="#dfdbd2" strokeWidth="1.500" /><path d="M119.500 2h4M119 7h5M119 10h5M119 13h3M119 16h3" stroke="#dfdbd2" strokeWidth="1.500" /><path d="M127 9l-3 5h2.500l-1 5 4-6h-2.500z" fill="#dfdbd2" />
          <path d="M140 8h9l-4.500 6z" fill="#dfdbd2" />
        </svg>
      </header>
      <div className="flex min-h-0 flex-1">
        <div className="flex w-[67px] shrink-0 flex-col bg-linear-to-b from-[#54373c] to-[#403034]">
          {launcher.map(([g, dot], i) => (
            <div key={i} className="flex h-16 shrink-0 items-center pl-[3px]">
              <span className={dot ? "size-1 rounded-full bg-[#e95420]" : "size-1"} />
              <svg viewBox="0 0 48 48" className="ml-[3px] size-[46px]">{g}</svg>
            </div>
          ))}
          <div className="ml-0.5 flex h-[62px] w-[62px] shrink-0 items-center rounded-[5px] bg-[#6f585d] pl-px">
            <span className="size-1 rounded-full bg-[#e95420]" />
            <svg viewBox="0 0 48 56" className="ml-[3px] h-[48px] w-[46px]"><Ink /></svg>
          </div>
          <div className="ml-[19px] mt-auto grid grid-cols-[6px_6px_6px] gap-[5.500px] pb-[17px]">
            {Array.from({ length: 9 }, (_, i) => <i key={i} className="size-[6px] rounded-full bg-[#f2f1f0]" />)}
          </div>
        </div>
        <Inkscape />
      </div>
    </section>
  );
}

export default function App() {
  return (
    <div className="flex h-[1080px] w-[3840px] overflow-hidden bg-white">
      <svg className="absolute size-0">
        <defs>
          <linearGradient id="blue" x1="0" y1="0" x2="1" y2="1"><stop offset="0" stopColor="#e4eef8" /><stop offset="1" stopColor="#93b5d8" /></linearGradient>
          <linearGradient id="pink" x1="0" y1="0" x2="1" y2="1"><stop offset="0" stopColor="#fff" /><stop offset="1" stopColor="#f79aa8" /></linearGradient>
          <linearGradient id="green" x1="0" y1="0" x2="1" y2="0"><stop offset="0" stopColor="#e9f6eb" /><stop offset="1" stopColor="#4eae62" /></linearGradient>
          <linearGradient id="page" x1="0" y1="0" x2="1" y2="1"><stop offset="0" stopColor="#fff" /><stop offset="1" stopColor="#c9c9c9" /></linearGradient>
        </defs>
      </svg>
      <Chromium />
      <Desktop />
    </div>
  );
}
